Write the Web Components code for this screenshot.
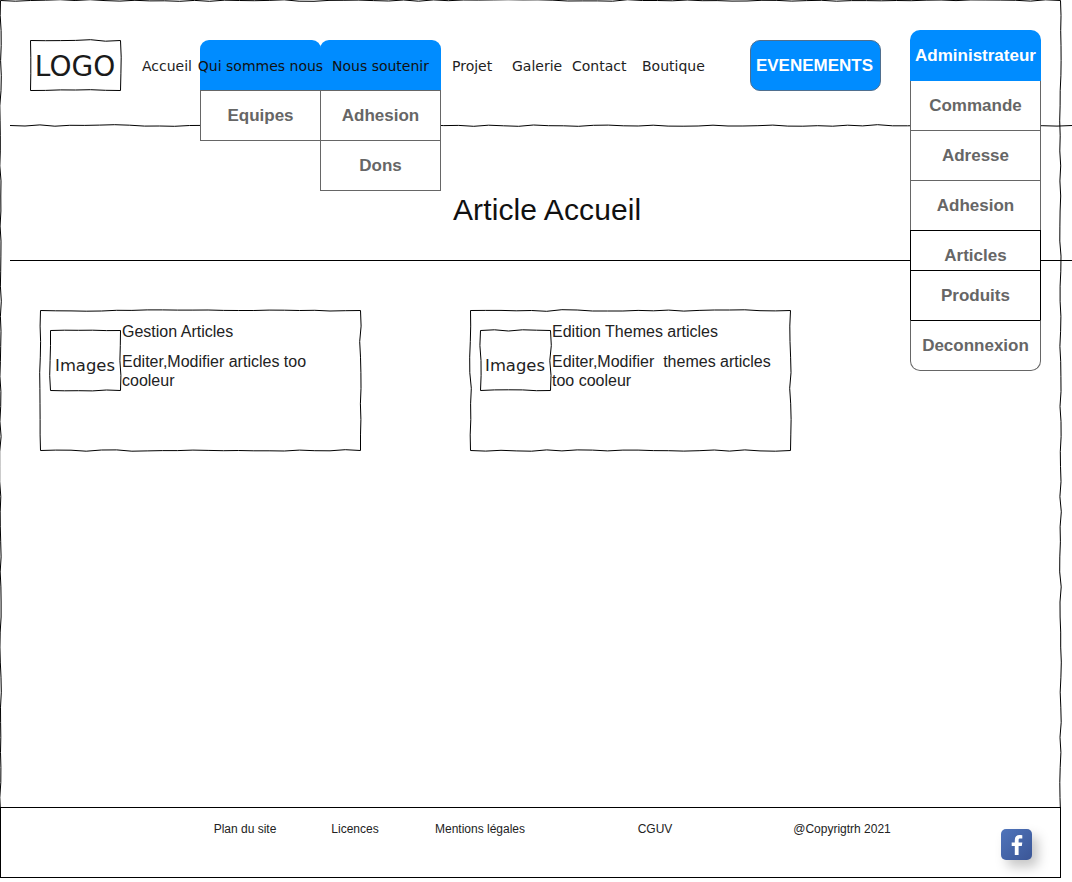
<!DOCTYPE html>
<html lang="fr">
<head>
<meta charset="utf-8">
<title>Article Accueil</title>
<style>
html, body { margin: 0; padding: 0; background: #fff; }
body { font-family: "Liberation Sans", Arial, sans-serif; color: #000; }
</style>
</head>
<body>
<wire-page>
  <site-header slot="header">
    <sketch-box w="90" h="50" seed="3" slot="logo" style="margin-right:1px"><span style="font:28px 'DejaVu Sans',sans-serif;display:flex;box-sizing:border-box;height:50px;padding:2px 0 0 0;align-items:center;justify-content:center;color:#1a1a1a">LOGO</span></sketch-box>
    <nav-link style="margin-left:21px;width:58px">Accueil</nav-link>
    <drop-menu label="Qui sommes nous">
      <menu-cell>Equipes</menu-cell>
    </drop-menu>
    <drop-menu label="Nous soutenir">
      <menu-cell>Adhesion</menu-cell>
      <menu-cell>Dons</menu-cell>
    </drop-menu>
    <nav-link style="margin-left:12px;width:60px">Projet</nav-link>
    <nav-link style="width:60px">Galerie</nav-link>
    <nav-link style="width:70px">Contact</nav-link>
    <nav-link style="width:108px">Boutique</nav-link>
    <event-button>EVENEMENTS</event-button>
    <admin-menu label="Administrateur">
      <menu-cell>Commande</menu-cell>
      <menu-cell>Adresse</menu-cell>
      <menu-cell>Adhesion</menu-cell>
      <menu-cell dark h="40">Articles</menu-cell>
      <menu-cell dark>Produits</menu-cell>
      <menu-cell last>Deconnexion</menu-cell>
    </admin-menu>
  </site-header>
  <page-title>Article Accueil</page-title>
  <article-card title-text="Gestion Articles" seed="11">Editer,Modifier articles too cooleur</article-card>
  <article-card title-text="Edition Themes articles" seed="29">Editer,Modifier  themes articles too cooleur</article-card>
  <site-footer slot="footer"></site-footer>
</wire-page>

<script>
// small seeded random so the hand drawn lines stay the same on every load
function rng(seed) {
  let s = seed * 7919 + 17;
  return () => { s = (s * 16807) % 2147483647; return (s % 1000) / 1000 - 0.5; };
}

// one hand drawn stroke, from a to b
function wobble(x1, y1, x2, y2, r, first) {
  const len = Math.hypot(x2 - x1, y2 - y1);
  const n = Math.max(2, Math.round(len / 15));
  const nx = (y2 - y1) / len, ny = (x2 - x1) / len;
  let d = first ? `M${x1} ${y1}` : '';
  for (let i = 1; i <= n; i++) {
    const t = i / n;
    const o = i === n ? 0 : r() * 1.7;
    d += `L${(x1 + (x2 - x1) * t + nx * o).toFixed(1)} ${(y1 + (y2 - y1) * t + ny * o).toFixed(1)}`;
  }
  return d;
}

class SketchBox extends HTMLElement {
  connectedCallback() {
    const w = +this.getAttribute('w'), h = +this.getAttribute('h');
    const r = rng(+this.getAttribute('seed') || 1);
    const a = 0.5, bx = w + 0.5, by = h + 0.5;
    const d = wobble(a, a, bx, a, r, true) + wobble(bx, a, bx, by, r) + wobble(bx, by, a, by, r) + wobble(a, by, a, a, r) + 'Z';
    this.attachShadow({ mode: 'open' }).innerHTML = `
<style>
:host { display: block; position: relative; flex: none; width: ${w}px; height: ${h}px; }
svg { position: absolute; left: 0; top: 0; overflow: visible; pointer-events: none; }
</style>
<svg width="${w + 1}" height="${h + 1}"><path d="${d}" fill="none" stroke="#000" stroke-width="1"/></svg>
<slot></slot>`;
  }
}
customElements.define('sketch-box', SketchBox);

class SketchLine extends HTMLElement {
  connectedCallback() {
    const w = +this.getAttribute('w');
    const d = wobble(0, 1.5, w, 1.5, rng(+this.getAttribute('seed') || 1), true);
    this.attachShadow({ mode: 'open' }).innerHTML = `
<style>:host { display: block; height: 3px; } svg { display: block; overflow: visible; }</style>
<svg width="${w}" height="3"><path d="${d}" fill="none" stroke="#000"/></svg>`;
  }
}
customElements.define('sketch-line', SketchLine);

class WirePage extends HTMLElement {
  connectedCallback() {
    this.attachShadow({ mode: 'open' }).innerHTML = `
<style>
:host { display: flex; flex-direction: column; position: relative; width: 1072px; height: 882px; overflow: hidden; }
.frame { position: absolute; left: 0; top: 0; }
.head { position: relative; z-index: 2; }
.rule { margin: -2px 0 -1px 10px; position: relative; z-index: 1; }
.line { height: 1px; background: #000; margin-left: 10px; }
.cards { flex: 1; display: flex; gap: 110px; padding: 49px 0 0 40px; position: relative; }
.foot { position: relative; background: #fff; margin-bottom: 4px; }
</style>
<sketch-box class="frame" w="1060" h="812" seed="5"></sketch-box>
<div class="head"><slot name="header"></slot></div>
<sketch-line class="rule" w="1062" seed="8"></sketch-line>
<slot name="title"></slot>
<div class="line"></div>
<div class="cards"><slot></slot></div>
<div class="foot"><slot name="footer"></slot></div>`;
    this.querySelector('page-title').slot = 'title';
  }
}
customElements.define('wire-page', WirePage);

class SiteHeader extends HTMLElement {
  connectedCallback() {
    this.attachShadow({ mode: 'open' }).innerHTML = `
<style>
:host { display: flex; align-items: flex-start; box-sizing: border-box; height: 126px; padding: 40px 0 0 30px; }
</style>
<slot name="logo"></slot>
<slot></slot>`;
  }
}
customElements.define('site-header', SiteHeader);

class NavLink extends HTMLElement {
  connectedCallback() {
    this.attachShadow({ mode: 'open' }).innerHTML = `
<style>
:host { display: flex; align-items: center; flex: none; box-sizing: border-box; height: 51px;
  font: 14px "DejaVu Sans", sans-serif; color: #222; white-space: nowrap; }
</style>
<slot></slot>`;
  }
}
customElements.define('nav-link', NavLink);

class MenuCell extends HTMLElement {
  connectedCallback() {
    const dark = this.hasAttribute('dark');
    const last = this.hasAttribute('last');
    const h = +this.getAttribute('h') || 50;
    this.attachShadow({ mode: 'open' }).innerHTML = `
<style>
:host { display: flex; align-items: center; justify-content: center; box-sizing: border-box;
  height: ${h + 1}px; margin-bottom: -1px; padding-top: ${h < 50 ? 10 : 0}px; background: #fff; position: relative;
  border: 1px solid ${dark ? '#000' : '#666'}; ${last ? 'border-radius: 0 0 10px 10px; border-top-color: #000;' : ''}
  font: bold 17px "Liberation Sans", Arial, sans-serif; color: #666; white-space: nowrap; }
</style>
<slot></slot>`;
  }
}
customElements.define('menu-cell', MenuCell);

class DropMenu extends HTMLElement {
  connectedCallback() {
    this.attachShadow({ mode: 'open' }).innerHTML = `
<style>
:host { display: block; position: relative; flex: none; width: 120px; height: 51px; }
.top { display: flex; align-items: center; justify-content: center; width: 121px; height: 51px;
  background: #008cff; border-radius: 9px 9px 0 0; font: 14px "DejaVu Sans", sans-serif; white-space: nowrap; }
.top span { position: relative; z-index: 1; color: #111; }
.list { position: absolute; left: 0; top: 50px; width: 121px; }
</style>
<div class="top"><span>${this.getAttribute('label')}</span></div>
<div class="list"><slot></slot></div>`;
  }
}
customElements.define('drop-menu', DropMenu);

class EventButton extends HTMLElement {
  connectedCallback() {
    this.attachShadow({ mode: 'open' }).innerHTML = `
<style>
:host { display: flex; align-items: center; justify-content: center; flex: none; box-sizing: border-box;
  width: 131px; height: 51px; padding-right: 2px; background: #008cff; border: 1px solid #4f6f8f;
  border-radius: 10px; font: bold 17px "Liberation Sans", Arial, sans-serif; color: #fff; white-space: nowrap; }
</style>
<slot></slot>`;
  }
}
customElements.define('event-button', EventButton);

class AdminMenu extends HTMLElement {
  connectedCallback() {
    this.attachShadow({ mode: 'open' }).innerHTML = `
<style>
:host { display: block; position: relative; flex: none; width: 131px; height: 0; margin: -10px 0 0 29px; }
.box { position: absolute; left: 0; top: 0; width: 131px; }
.top { display: flex; align-items: center; justify-content: center; height: 51px; margin-bottom: -1px;
  position: relative; z-index: 1; background: #008cff;
  border-radius: 10px 10px 0 0; font: bold 17px "Liberation Sans", Arial, sans-serif; color: #fff; white-space: nowrap; }
</style>
<div class="box">
  <div class="top">${this.getAttribute('label')}</div>
  <slot></slot>
</div>`;
  }
}
customElements.define('admin-menu', AdminMenu);

class PageTitle extends HTMLElement {
  connectedCallback() {
    this.attachShadow({ mode: 'open' }).innerHTML = `
<style>
:host { display: block; box-sizing: border-box; height: 134px; padding: 66px 0 0 453px;
  font: 30px/36px "Liberation Sans", Arial, sans-serif; letter-spacing: .1px; color: #111; }
</style>
<slot></slot>`;
  }
}
customElements.define('page-title', PageTitle);

class ArticleCard extends HTMLElement {
  connectedCallback() {
    const seed = +this.getAttribute('seed') || 1;
    this.attachShadow({ mode: 'open' }).innerHTML = `
<style>
:host { display: block; flex: none; }
.in { display: flex; padding: 20px 0 0 10px; }
.img { font: 16.4px "DejaVu Sans", sans-serif; color: #222; display: flex; height: 60px; align-items: center;
  justify-content: center; padding-top: 10px; box-sizing: border-box; }
.txt { width: 238px; margin: -8px 0 0 2px; font: 16px/19px "Liberation Sans", Arial, sans-serif; color: #222; white-space: pre-wrap; }
.txt p { margin: 0 0 11px; }
</style>
<sketch-box w="320" h="140" seed="${seed}">
  <div class="in">
    <sketch-box w="70" h="60" seed="${seed + 1}"><div class="img">Images</div></sketch-box>
    <div class="txt"><p>${this.getAttribute('title-text')}</p><p><slot></slot></p></div>
  </div>
</sketch-box>`;
  }
}
customElements.define('article-card', ArticleCard);

class SiteFooter extends HTMLElement {
  connectedCallback() {
    const links = [['Plan du site', 80], ['Licences', 140], ['Mentions légales', 110], ['CGUV', 240], ['@Copyrigtrh 2021', 134]];
    this.attachShadow({ mode: 'open' }).innerHTML = `
<style>
:host { display: flex; align-items: flex-start; box-sizing: border-box; width: 1061px; height: 71px;
  padding: 14px 0 0 204px; border: 1px solid #000; background: #fff;
  font: 12px/15px "Liberation Sans", Arial, sans-serif; color: #222; }
span { flex: none; text-align: center; white-space: nowrap; }
svg { flex: none; margin: 7px 0 0 92px; filter: drop-shadow(6px 7px 6px rgba(0,0,0,.22)); }
</style>
${links.map(([t, w]) => `<span style="width:${w}px">${t}</span>`).join('')}
<svg width="31" height="31" viewBox="0 0 31 31">
  <defs><linearGradient id="fb" x1="0" y1="0" x2="1" y2="1"><stop offset="0" stop-color="#4f74bb"/><stop offset="1" stop-color="#3b5696"/></linearGradient></defs>
  <rect width="31" height="31" rx="5" fill="url(#fb)"/>
  <path d="M17.6 26v-9h3.2l.5-3.6h-3.7v-2.1c0-1 .3-1.7 1.8-1.7h1.9V6.3c-.4 0-1.5-.2-2.8-.2-2.8 0-4.7 1.7-4.7 4.8v2.5h-3.1V17h3.1v9z" fill="#fff"/>
</svg>`;
  }
}
customElements.define('site-footer', SiteFooter);
</script>
</body>
</html>
